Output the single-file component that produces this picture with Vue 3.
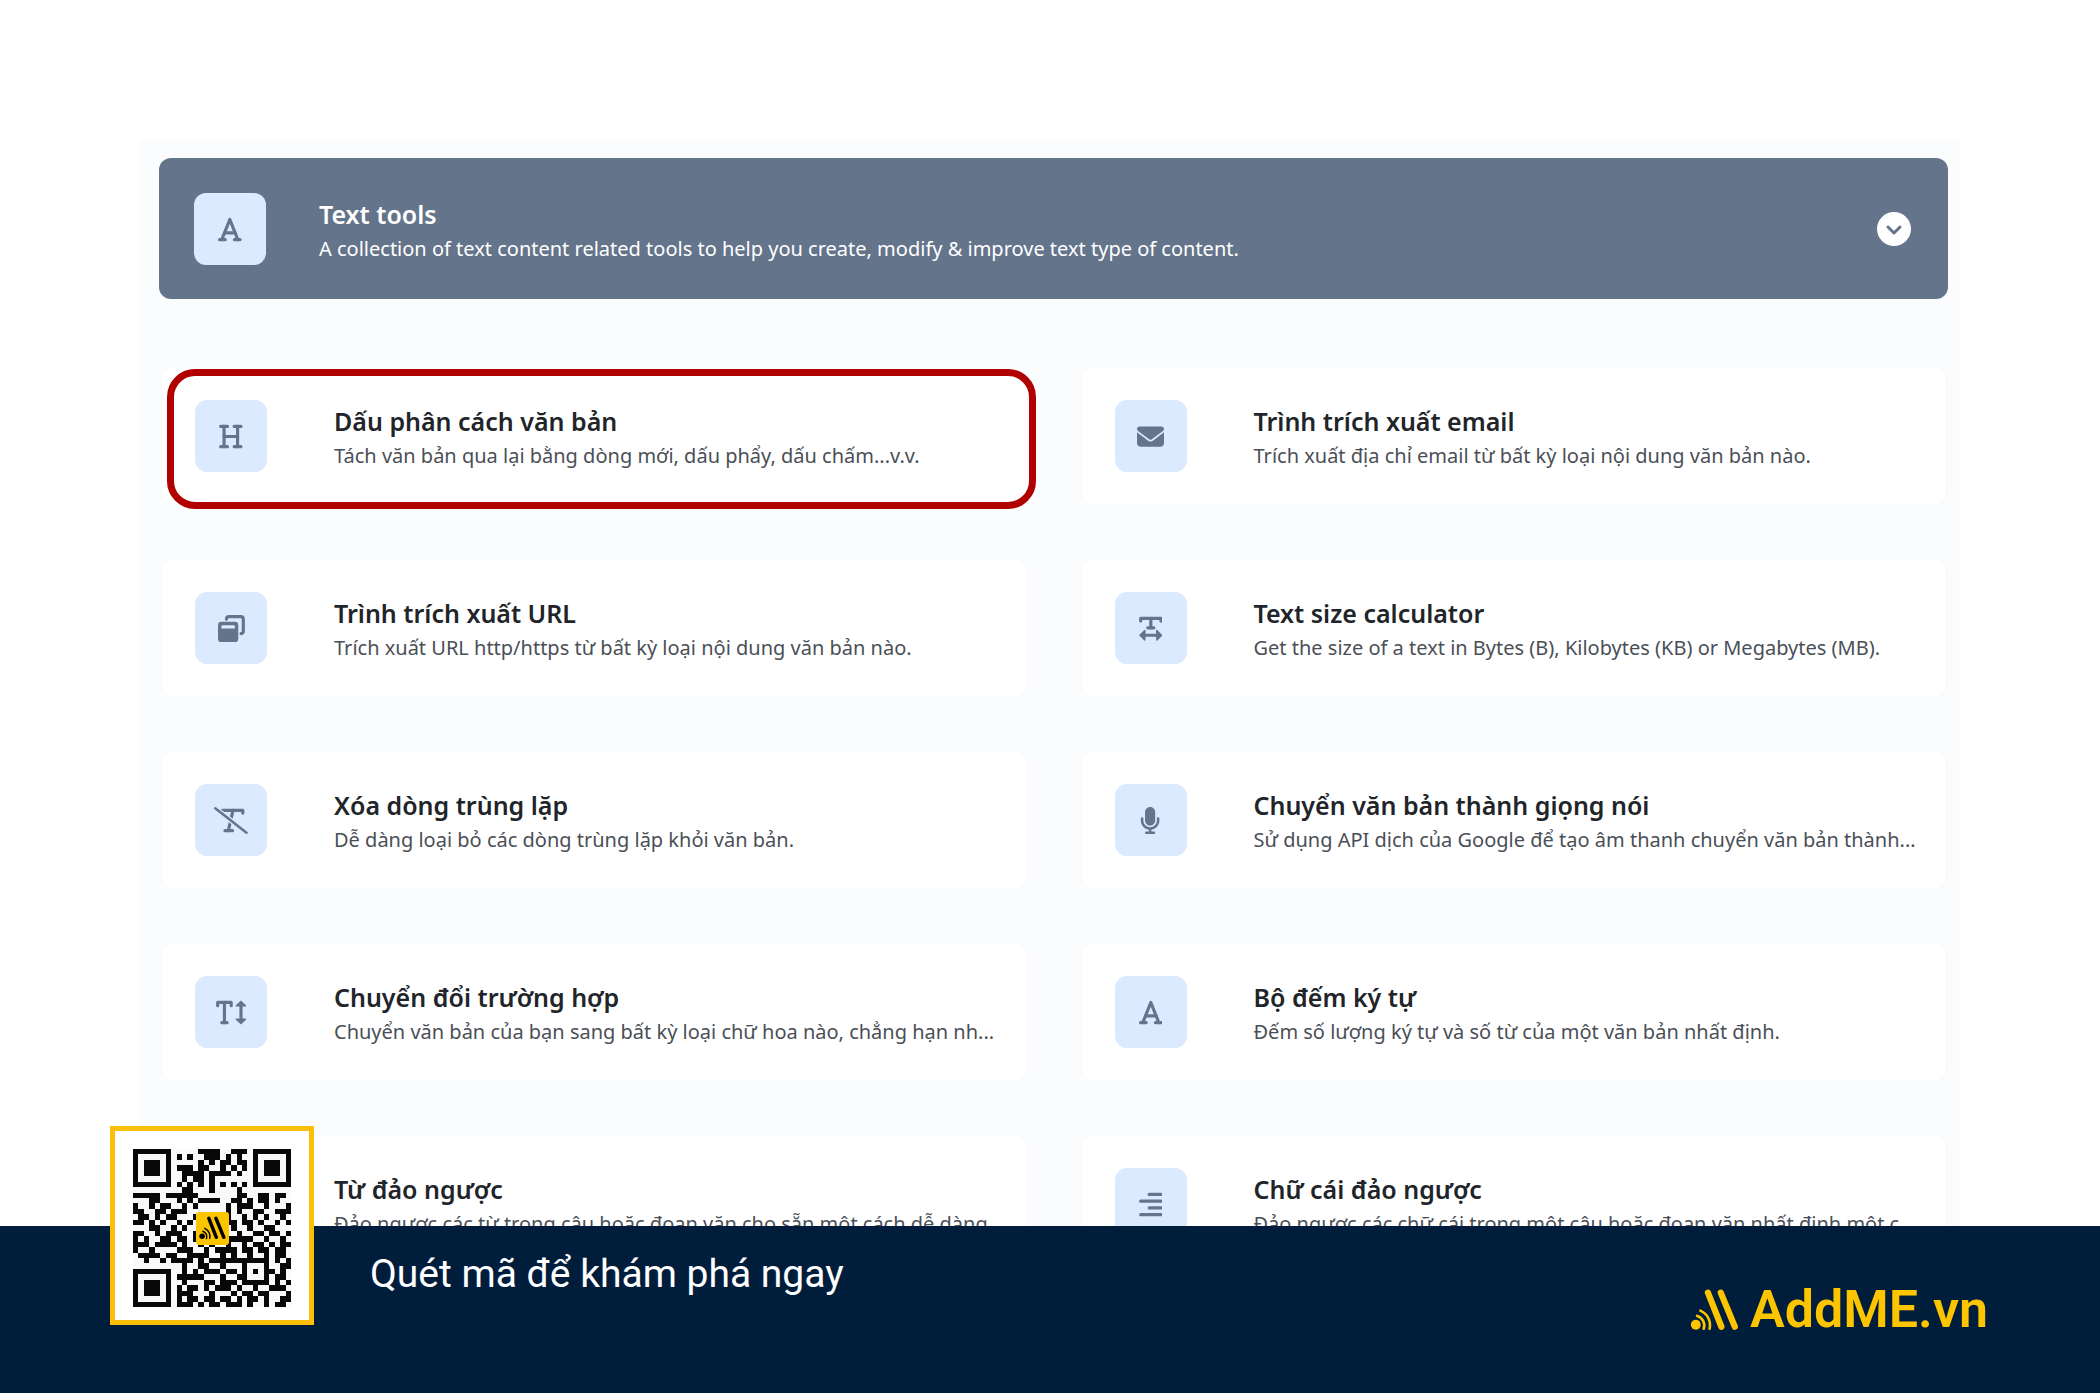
<script setup>
const icons = {
  font: { w: 448, lines: ['M72 448 224 66 376 448', 'M124 320H324', 'M30 448H136', 'M312 448H418'] },
  heading: { w: 448, lines: ['M96 64V448', 'M352 64V448', 'M96 256H352', 'M32 64H160', 'M288 64H416', 'M32 448H160', 'M288 448H416'] },
  envelope: {
    w: 512,
    fill: 'M48 64C21.5 64 0 85.5 0 112c0 15.1 7.1 29.3 19.2 38.4L236.8 313.6c11.4 8.5 27 8.5 38.4 0L492.8 150.4c12.1-9.1 19.2-23.3 19.2-38.4c0-26.5-21.5-48-48-48H48zM0 176V384c0 35.3 28.7 64 64 64H448c35.3 0 64-28.7 64-64V176L294.4 339.2c-22.8 17.1-54 17.1-76.8 0L0 176z',
  },
  windows: {
    w: 512,
    fill: 'M64 128H320a64 64 0 0 1 64 64V448a64 64 0 0 1-64 64H64a64 64 0 0 1-64-64V192a64 64 0 0 1 64-64ZM88 192a24 24 0 0 0-24 24v40H320V216a24 24 0 0 0-24-24Z',
    lines: ['M160 78a48 48 0 0 1 48-46H432a48 48 0 0 1 48 48V304a48 48 0 0 1-44 48'],
  },
  textWidth: {
    w: 448,
    fill: 'M0 384 100 284a14 14 0 0 1 24 12V472a14 14 0 0 1-24 12ZM448 384 348 284a14 14 0 0 0-24 12V472a14 14 0 0 0 24 12Z',
    lines: ['M32 116V64H416V116', 'M224 64V244', 'M166 244H282', 'M100 384H348'],
  },
  textSlash: { w: 640, lines: ['M158 116V64H546V116', 'M360 64 272 448', 'M208 448H352'], slash: 'M24 26 616 486' },
  microphone: {
    w: 384,
    fill: 'M192 0C139 0 96 43 96 96V256c0 53 43 96 96 96s96-43 96-96V96c0-53-43-96-96-96zM64 216c0-13.3-10.7-24-24-24s-24 10.7-24 24v40c0 89.1 66.2 162.7 152 174.4V464H120c-13.3 0-24 10.7-24 24s10.7 24 24 24h72 72c13.3 0 24-10.7 24-24s-10.7-24-24-24H216V430.4c85.8-11.7 152-85.3 152-174.4V216c0-13.3-10.7-24-24-24s-24 10.7-24 24v40c0 70.7-57.3 128-128 128s-128-57.3-128-128V216z',
  },
  textHeight: {
    w: 576,
    fill: 'M474 28 376 120a14 14 0 0 0 10 24H562a14 14 0 0 0 10-24ZM474 484 376 392a14 14 0 0 1 10-24H562a14 14 0 0 1 10 24Z',
    lines: ['M32 126V64H288V126', 'M160 64V448', 'M110 448H210', 'M474 120V392'],
  },
  alignRight: { w: 448, lines: ['M192 64H416', 'M32 192H416', 'M192 320H416', 'M32 448H416'] },
}

const tools = [
  { icon: 'heading', title: 'Dấu phân cách văn bản', text: 'Tách văn bản qua lại bằng dòng mới, dấu phẩy, dấu chấm...v.v.', marked: true },
  { icon: 'envelope', title: 'Trình trích xuất email', text: 'Trích xuất địa chỉ email từ bất kỳ loại nội dung văn bản nào.' },
  { icon: 'windows', title: 'Trình trích xuất URL', text: 'Trích xuất URL http/https từ bất kỳ loại nội dung văn bản nào.' },
  { icon: 'textWidth', title: 'Text size calculator', text: 'Get the size of a text in Bytes (B), Kilobytes (KB) or Megabytes (MB).' },
  { icon: 'textSlash', title: 'Xóa dòng trùng lặp', text: 'Dễ dàng loại bỏ các dòng trùng lặp khỏi văn bản.' },
  { icon: 'microphone', title: 'Chuyển văn bản thành giọng nói', text: 'Sử dụng API dịch của Google để tạo âm thanh chuyển văn bản thành...' },
  { icon: 'textHeight', title: 'Chuyển đổi trường hợp', text: 'Chuyển văn bản của bạn sang bất kỳ loại chữ hoa nào, chẳng hạn nh...' },
  { icon: 'font', title: 'Bộ đếm ký tự', text: 'Đếm số lượng ký tự và số từ của một văn bản nhất định.' },
  { icon: 'alignRight', title: 'Từ đảo ngược', text: 'Đảo ngược các từ trong câu hoặc đoạn văn cho sẵn một cách dễ dàng.' },
  { icon: 'alignRight', title: 'Chữ cái đảo ngược', text: 'Đảo ngược các chữ cái trong một câu hoặc đoạn văn nhất định một c...' },
]

const qr = [
  '11111110000011110011101111111',
  '10000010101001110101001000001',
  '10111010000010101101101011101',
  '10111010111011001010101011101',
  '10111010011110111101001011101',
  '10000010010110100000001000001',
  '11111110101010101010101111111',
  '00000000011000100001000000000',
  '11111011111100000001100110110',
  '00011000101011110011010110100',
  '10010110010100000101110010001',
  '11001101110000000101001100111',
  '01101011000110101100101010010',
  '11010100101001010110110100101',
  '00011001010010101010010011000',
  '11001011100101101001001101101',
  '10100110110101011111110010010',
  '11101111010010100100101101011',
  '10010000111001011110110110110',
  '01111011001111001010010010110',
  '00100101111010111111111110101',
  '00000000010011001000100010011',
  '11111110010101110110101011010',
  '10000010111110001001100010110',
  '10111010010001101110111110101',
  '10111010101101011101001001110',
  '10111010111000100010110110001',
  '10000010101101101101011010011',
  '11111110111010110111010010110',
]
const qrPath = qr
  .map((row, y) => [...row].map((cell, x) => (cell === '1' ? `M${x} ${y}h1v1h-1z` : '')).join(''))
  .join('')
</script>

<template>
  <div class="page">
    <main class="stage">
      <section class="panel">
        <header class="banner">
          <span class="tile">
            <svg class="glyph" :viewBox="`0 0 ${icons.font.w} 512`" aria-hidden="true">
              <path v-for="d in icons.font.lines" :key="d" class="line" :d="d" />
            </svg>
          </span>
          <div class="copy">
            <h1 class="title">Text tools</h1>
            <p class="text">A collection of text content related tools to help you create, modify &amp; improve text type of content.</p>
          </div>
          <button class="toggle" type="button" aria-label="Text tools">
            <svg viewBox="0 0 34 34" aria-hidden="true"><path d="m11 15 6 6 6-6" /></svg>
          </button>
        </header>

        <div class="grid">
          <a v-for="tool in tools" :key="tool.title" class="card" :class="{ marked: tool.marked }" href="#">
            <span class="tile">
              <svg class="glyph" :viewBox="`0 0 ${icons[tool.icon].w} 512`" aria-hidden="true">
                <path v-if="icons[tool.icon].fill" class="solid" fill-rule="evenodd" :d="icons[tool.icon].fill" />
                <path v-for="d in icons[tool.icon].lines" :key="d" class="line" :d="d" />
                <template v-if="icons[tool.icon].slash">
                  <path class="gap" :d="icons[tool.icon].slash" />
                  <path class="slash" :d="icons[tool.icon].slash" />
                </template>
              </svg>
            </span>
            <div class="copy">
              <h2 class="title">{{ tool.title }}</h2>
              <p class="text">{{ tool.text }}</p>
            </div>
          </a>
        </div>
      </section>
    </main>

    <footer class="footer">
      <div class="qr">
        <svg class="code" viewBox="0 0 29 29" shape-rendering="crispEdges" role="img" aria-label="QR">
          <path :d="qrPath" />
        </svg>
        <span class="badge">
          <svg class="mark" viewBox="66 56 148 128" aria-hidden="true">
            <circle cx="83" cy="165" r="15" />
            <path class="arc" d="M87 138A30 30 0 0 1 107 177M97 122A48 48 0 0 1 125 177" />
            <path class="bar" d="M120 67 161 171M159 67 202 171" />
          </svg>
        </span>
      </div>
      <p class="slogan">Quét mã để khám phá ngay</p>
      <a class="brand" href="#">
        <svg class="mark" viewBox="66 56 148 128" aria-hidden="true">
          <circle cx="83" cy="165" r="15" />
          <path class="arc" d="M87 138A30 30 0 0 1 107 177M97 122A48 48 0 0 1 125 177" />
          <path class="bar" d="M120 67 161 171M159 67 202 171" />
        </svg>
        <span>AddME.vn</span>
      </a>
    </footer>
  </div>
</template>

<style>
body {
  margin: 0;
  background: #fff;
}
</style>

<style scoped>
.page {
  display: flex;
  flex-direction: column;
  height: 100vh;
  padding-bottom: 7px;
  box-sizing: border-box;
  font-family: "Noto Sans", "Open Sans", sans-serif;
}
.stage {
  flex: 1;
  min-height: 0;
  overflow: hidden;
  padding: 140px 140px 0;
}
.panel {
  padding: 18px 12px 40px 19px;
  background: #fbfcfe;
}
.banner {
  display: flex;
  align-items: center;
  gap: 53px;
  padding: 35px 37px 34px 35px;
  border-radius: 12px;
  background: #64748b;
  color: #fff;
}
.tile {
  display: flex;
  flex: none;
  align-items: center;
  justify-content: center;
  width: 72px;
  height: 72px;
  border-radius: 12px;
  background: #dbeafe;
}
.glyph {
  height: 27px;
}
.solid {
  fill: #64748b;
}
.line,
.gap,
.slash {
  fill: none;
  stroke: #64748b;
  stroke-width: 60;
  stroke-linecap: round;
  stroke-linejoin: round;
}
.gap {
  stroke: #dbeafe;
  stroke-width: 100;
}
.slash {
  stroke-width: 48;
}
.copy {
  display: grid;
  flex: 1;
  gap: 2px;
  min-width: 0;
  padding-top: 4px;
  white-space: nowrap;
}
.title,
.text {
  margin: 0;
}
.title {
  font-size: 25px;
  font-weight: 600;
  line-height: 34px;
}
.text {
  font-size: 20px;
  line-height: 32px;
}
.toggle {
  width: 34px;
  height: 34px;
  padding: 0;
  border: 0;
  border-radius: 50%;
  background: #fff;
}
.toggle svg {
  display: block;
  fill: none;
  stroke: #64748b;
  stroke-width: 3;
  stroke-linecap: round;
  stroke-linejoin: round;
}
.grid {
  display: grid;
  grid-template-columns: 1fr 1fr;
  gap: 52px 53px;
  padding: 67px 1px 0 2px;
}
.card {
  position: relative;
  display: flex;
  align-items: center;
  gap: 67px;
  min-width: 0;
  padding: 33px;
  border: 1px solid #f7f8fa;
  border-radius: 14px;
  background: #fff;
  color: #212529;
  text-decoration: none;
}
.card .text {
  color: #4a4f57;
}
.marked::after {
  content: "";
  position: absolute;
  inset: 2px -9px -4px 5px;
  border: 7px solid #b00000;
  border-radius: 28px;
}
.footer {
  position: relative;
  display: flex;
  justify-content: space-between;
  height: 167px;
  padding: 0 112px 0 370px;
  background: #001e3c;
}
.qr {
  position: absolute;
  top: -100px;
  left: 110px;
  display: flex;
  padding: 18px 18px 13px;
  border: 5px solid #fbbf08;
  background: #fff;
}
.code {
  width: 158px;
  height: 158px;
  background: #f9f9f9;
}
.code path {
  fill: #080808;
}
.badge {
  position: absolute;
  inset: 5px 0 0;
  display: flex;
  align-items: center;
  justify-content: center;
  width: 33px;
  height: 33px;
  margin: auto;
  border-radius: 3px;
  background: #fdc500;
}
.mark {
  width: 49px;
  height: 42px;
  fill: currentColor;
  stroke: none;
}
.badge .mark {
  width: 27px;
  height: 24px;
}
.arc,
.bar {
  fill: none;
  stroke: currentColor;
  stroke-linecap: round;
  stroke-width: 8;
}
.bar {
  stroke-width: 19;
}
.slogan {
  margin: 22px 0 0;
  color: #fff;
  font-family: Roboto, sans-serif;
  font-size: 39px;
  font-weight: 400;
  line-height: 52px;
}
.brand {
  display: flex;
  align-items: center;
  align-self: flex-start;
  gap: 11px;
  margin-top: 52px;
  color: #fdc500;
  font-family: Roboto, sans-serif;
  font-size: 52px;
  font-weight: 600;
  line-height: 64px;
  text-decoration: none;
}
</style>
